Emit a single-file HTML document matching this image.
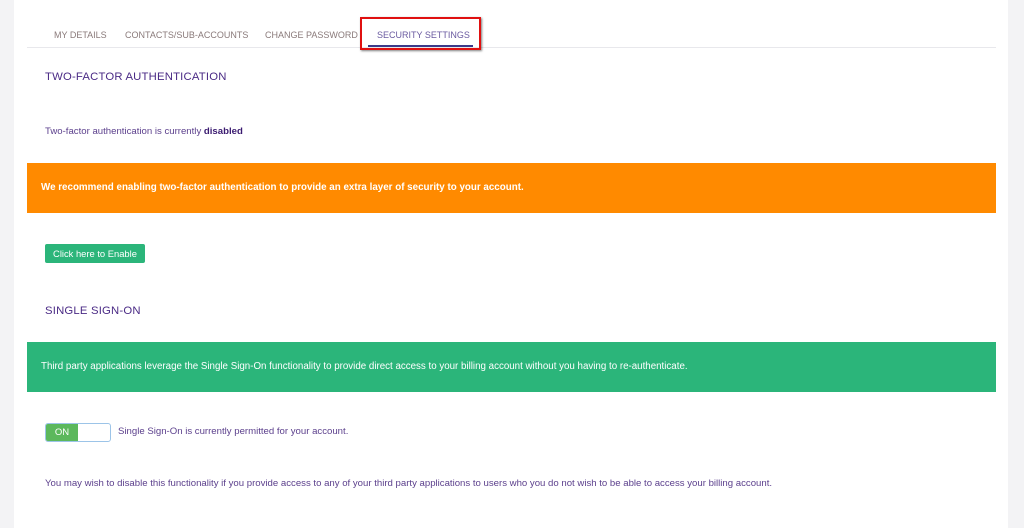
<!DOCTYPE html>
<html><head><style>
body{margin:0;width:1024px;height:528px;background:#f3f3f5;font-family:"Liberation Sans",sans-serif;overflow:hidden;position:relative}
.card{position:absolute;left:14px;top:0;width:994px;height:528px;background:#fff}
.a{position:absolute;white-space:nowrap}
.tab{font-size:9px;color:#8a7a7a;top:30px}
.h{font-size:11.3px;color:#4a2a85;letter-spacing:0.2px}
.t{font-size:9.6px;color:#5b3f8c}
</style></head><body>
<div class="card"></div>
<div class="a tab" style="left:54px">MY DETAILS</div>
<div class="a tab" style="left:125px">CONTACTS/SUB-ACCOUNTS</div>
<div class="a tab" style="left:265px">CHANGE PASSWORD</div>
<div class="a tab" style="left:377px;color:#6a5aa0">SECURITY SETTINGS</div>
<div class="a" style="left:27px;top:47px;width:969px;height:1px;background:#e8e8ec"></div>
<div class="a" style="left:368px;top:45px;width:105px;height:2px;background:#3a3a8a"></div>
<div class="a" style="left:360px;top:17px;width:117px;height:29px;border:2px solid #e01010;box-shadow:1px 1px 2px rgba(0,0,0,.5)"></div>
<div class="a h" style="left:45px;top:71px">TWO-FACTOR AUTHENTICATION</div>
<div class="a t" style="left:45px;top:126px">Two-factor authentication is currently <b style="color:#3a1a70">disabled</b></div>
<div class="a" style="left:27px;top:163px;width:969px;height:50px;background:#ff8a00"></div>
<div class="a" style="left:41px;top:182px;font-size:9.8px;color:#fff;font-weight:bold">We recommend enabling two-factor authentication to provide an extra layer of security to your account.</div>
<div class="a" style="left:45px;top:244px;width:100px;height:19px;background:#2bb57a;border-radius:2px;color:#fff;font-size:9.4px;text-align:center;line-height:19px">Click here to Enable</div>
<div class="a h" style="left:45px;top:305px">SINGLE SIGN-ON</div>
<div class="a" style="left:27px;top:342px;width:969px;height:50px;background:#2bb57a"></div>
<div class="a" style="left:41px;top:361px;font-size:9.75px;color:#fff">Third party applications leverage the Single Sign-On functionality to provide direct access to your billing account without you having to re-authenticate.</div>
<div class="a" style="left:45px;top:423px;width:64px;height:17px;border:1px solid #9cc4e8;border-radius:3px;background:#fff;overflow:hidden">
<div style="width:32px;height:17px;background:#5cb85c;color:#fff;font-size:9.5px;line-height:17px;text-align:center">ON</div></div>
<div class="a t" style="left:118px;top:426px">Single Sign-On is currently permitted for your account.</div>
<div class="a t" style="left:45px;top:478px">You may wish to disable this functionality if you provide access to any of your third party applications to users who you do not wish to be able to access your billing account.</div>
</body></html>
